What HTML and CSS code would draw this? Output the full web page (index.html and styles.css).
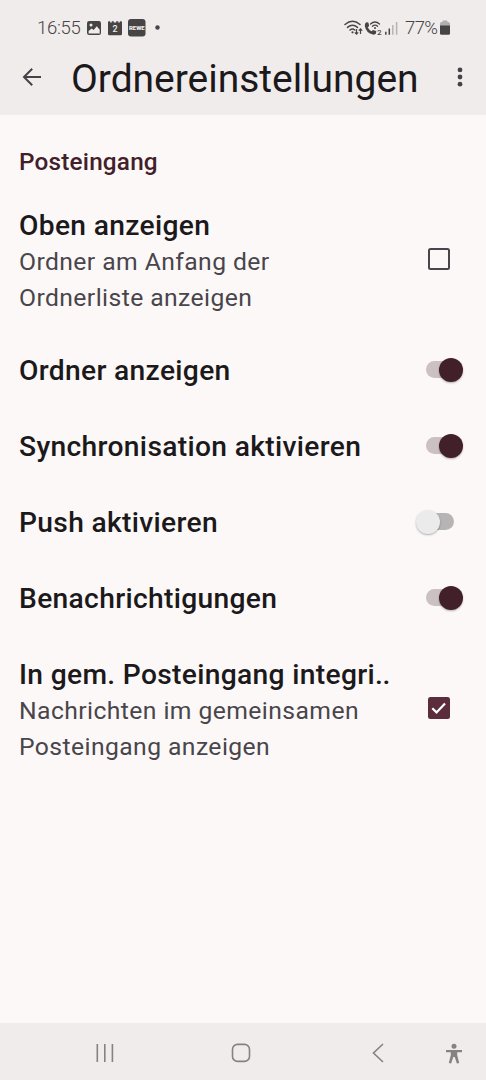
FILE: index.html
```html
<!DOCTYPE html>
<html lang="de">
<head>
  <meta charset="UTF-8" />
  <meta name="viewport" content="width=device-width, initial-scale=1.0" />
  <title>Ordnereinstellungen</title>
  <link rel="stylesheet" href="styles.css">
</head>
<body>
  <header class="top">
    <div class="statusbar">
      <span class="clock">16:55</span>
      <svg class="status-left" width="76" height="20" viewBox="0 0 76 20">
        <!-- gallery -->
        <rect x="1" y="3" width="14" height="14" rx="2.2" fill="#464444"/>
        <circle cx="5" cy="7" r="1.5" fill="#f0eceb"/>
        <path d="M2.6 13l3-2.4 2 1.3 3.2-3.7 2.9 3.6v3.6H2.6z" fill="#f0eceb"/>
        <!-- calendar -->
        <path d="M22 4.2q0-1 1-1h1.2v1.2h1.6V3.2h2v1.2h2.4V3.2h2v1.2h1.6V3.2H35q1 0 1 1V16q0 1.3-1.3 1.3H23.3Q22 17.3 22 16z" fill="#464444"/>
        <text x="29" y="13.7" class="cal-day">2</text>
        <!-- shop app -->
        <rect x="42" y="1" width="17.5" height="17.5" rx="3" fill="#464444"/>
        <text x="50.8" y="12" class="shop">REWE</text>
        <circle cx="71.5" cy="9.5" r="2.2" fill="#464444"/>
      </svg>
      <svg class="status-right" width="56" height="20" viewBox="0 0 56 20">
        <!-- wifi -->
        <g fill="none" stroke="#464444" stroke-width="1.5" stroke-linecap="round">
          <path d="M2 6.5Q9.5 0 17 6.5"/>
          <path d="M4.5 9.4Q9.5 5.2 14.5 9.4"/>
          <path d="M7 12Q9.5 10 11.8 12"/>
        </g>
        <circle cx="9.5" cy="14.3" r="1.1" fill="#464444"/>
        <path d="M13.5 11v5M11.8 14.4L13.5 16.2l1.7-1.8M17.5 16v-5M15.8 12.7L17.5 10.9l1.7 1.8" fill="none" stroke="#464444" stroke-width="1.2"/>
        <!-- wifi calling -->
        <path d="M23.3 4.3l2 .2.9 3.4-1.5 1.3q1.2 2.6 3.8 4l1.5-1.3 3.2 1.2-.2 2.5q-1 1.2-3 1-6.8-1.2-8.2-8.5-.2-2.8 1.5-3.8z" fill="#464444"/>
        <path d="M27.500 6Q32 2 36.500 6M29.400 8.200Q32 6 34.600 8.200" fill="none" stroke="#464444" stroke-width="1.3" stroke-linecap="round"/>
        <circle cx="32" cy="10" r="1" fill="#464444"/>
        <text x="34" y="16.6" class="sim">2</text>
        <!-- signal -->
        <path d="M42.8 13.7v3M46.3 10.5v6.2" stroke="#464444" stroke-width="1.5"/>
        <path d="M49.8 7v9.7M53.6 4v12.7" stroke="#b5b2b1" stroke-width="1.5"/>
      </svg>
      <span class="percent">77%</span>
      <svg class="battery" width="10" height="16" viewBox="0 0 10 16">
        <path d="M0 3.5Q0 2 1.5 2H2.5V1.2Q2.5.5 3.3.5h3.4q.8 0 .8.7V2h1q1.5 0 1.5 1.5V6H0z" fill="#b1aead"/>
        <path d="M0 5.5h10v7.7q0 1.5-1.5 1.5h-7Q0 14.7 0 13.2z" fill="#464444"/>
      </svg>
    </div>
    <div class="appbar">
      <svg class="back" width="20" height="20" viewBox="0 0 20 20">
        <path d="M19 10H2M10.2 1.8L2 10l8.2 8.2" fill="none" stroke="#464348" stroke-width="2"/>
      </svg>
      <h1>Ordnereinstellungen</h1>
      <svg class="more" width="6" height="20" viewBox="0 0 6 20">
        <circle cx="3" cy="2.9" r="2.4"/>
        <circle cx="3" cy="10" r="2.4"/>
        <circle cx="3" cy="17.2" r="2.4"/>
      </svg>
    </div>
  </header>

  <main class="settings">
    <h2>Posteingang</h2>
    <div class="item">
      <div class="text">
        <div class="title">Oben anzeigen</div>
        <div class="summary">Ordner am Anfang der<br>Ordnerliste anzeigen</div>
      </div>
      <div class="control"><span class="checkbox"></span></div>
    </div>
    <div class="item">
      <div class="text"><div class="title">Ordner anzeigen</div></div>
      <div class="control"><span class="switch on"></span></div>
    </div>
    <div class="item">
      <div class="text"><div class="title">Synchronisation aktivieren</div></div>
      <div class="control"><span class="switch on"></span></div>
    </div>
    <div class="item">
      <div class="text"><div class="title">Push aktivieren</div></div>
      <div class="control"><span class="switch"></span></div>
    </div>
    <div class="item">
      <div class="text"><div class="title">Benachrichtigungen</div></div>
      <div class="control"><span class="switch on"></span></div>
    </div>
    <div class="item">
      <div class="text">
        <div class="title">In gem. Posteingang integri<span class="dots">..</span></div>
        <div class="summary">Nachrichten im gemeinsamen<br>Posteingang anzeigen</div>
      </div>
      <div class="control">
        <span class="checkbox checked">
          <svg width="22" height="22" viewBox="0 0 22 22">
            <path d="M4.3 11.2l4.2 4.2 8.5-9" fill="none" stroke="#fff" stroke-width="2.2"/>
          </svg>
        </span>
      </div>
    </div>
  </main>

  <nav class="navbar">
    <svg width="20" height="20" viewBox="0 0 20 20"><path d="M2.3 1v18M9.8 1v18M17.4 1v18"/></svg>
    <svg width="20" height="20" viewBox="0 0 20 20"><rect x="1.5" y="1.4" width="17" height="17" rx="5"/></svg>
    <svg width="14" height="20" viewBox="0 0 14 20"><path d="M12 1L2.5 10l9.5 9"/></svg>
    <svg class="a11y" width="18" height="22" viewBox="0 0 18 22">
      <circle cx="9" cy="3.2" r="2.5"/>
      <path d="M1 7h16v2.2H12.2V12l2 8-2.3.6L9.7 14H8.3l-2.2 6.6-2.3-.6 2-8V9.2H1z"/>
    </svg>
  </nav>
</body>
</html>
```

FILE: styles.css
```css
* {
  box-sizing: border-box;
}
body {
  margin: 0;
  height: 1080px;
  display: flex;
  flex-direction: column;
  font-family: Roboto, sans-serif;
  background-color: #fcf8f7;
  color: #1b191b;
  overflow: hidden;
}
svg {
  display: block;
  flex: none;
}
.top {
  height: 115px;
  background-color: #f0eceb;
}
.statusbar {
  display: flex;
  align-items: center;
  height: 41px;
  padding: 14px 0 0 37px;
  color: #464444;
}
.clock {
  width: 49px;
  font-size: 18.5px;
  font-weight: 300;
  letter-spacing: -0.3px;
  white-space: nowrap;
}
.status-right {
  margin-left: 181px;
}
.cal-day {
  font-size: 9px;
  font-weight: 500;
  fill: #f0eceb;
  text-anchor: middle;
}
.shop {
  font-size: 6px;
  font-weight: 900;
  fill: #f0eceb;
  text-anchor: middle;
}
.sim {
  font-size: 8px;
  font-weight: 500;
  fill: #464444;
}
.percent {
  width: 35px;
  margin-left: 6px;
  font-size: 18.5px;
  font-weight: 300;
  letter-spacing: -0.6px;
  white-space: nowrap;
}
.appbar {
  display: flex;
  align-items: center;
  height: 72px;
  padding: 0 23px 0 22px;
}
h1 {
  flex: 1;
  margin: 4px 0 0 29px;
  font-size: 39px;
  font-weight: 400;
  line-height: 48px;
  letter-spacing: -0.03px;
  white-space: nowrap;
}
.more {
  fill: #464348;
}
.settings {
  flex: 1;
}
h2 {
  height: 73px;
  margin: 0;
  padding: 30px 0 0 19px;
  font-size: 24.3px;
  font-weight: 500;
  line-height: 33px;
  letter-spacing: 0.2px;
  color: #42202a;
}
.item {
  display: flex;
  align-items: center;
  justify-content: space-between;
  min-height: 76px;
  padding-left: 19px;
}
.text {
  padding: 20px 0;
  white-space: nowrap;
}
.text:has(.summary) {
  padding: 20px 0 17px;
}
.title {
  font-size: 28.2px;
  font-weight: 500;
  line-height: 36px;
  letter-spacing: 0.33px;
}
.dots {
  letter-spacing: -0.5px;
}
.summary {
  font-size: 24.7px;
  line-height: 36px;
  letter-spacing: 0.42px;
  color: #48454b;
}
.control {
  width: 71px;
  margin-bottom: 3px;
}
.checkbox {
  display: block;
  width: 22px;
  height: 22px;
  margin-left: 13px;
  border: 2px solid #48454b;
  border-radius: 2.5px;
}
.checkbox.checked {
  border: none;
  background-color: #5b2d3c;
}
.switch {
  display: flex;
  align-items: center;
  width: 28px;
  height: 17px;
  margin-left: 11px;
  border-radius: 9px;
  background-color: #b6b4b4;
}
.switch::before {
  content: "";
  flex: none;
  width: 24px;
  height: 24px;
  margin-left: -10px;
  border-radius: 50%;
  background-color: #ebebeb;
  box-shadow: 0 1px 2px rgba(0, 0, 0, 0.3);
}
.switch.on {
  background-color: #cbc0c2;
}
.switch.on::before {
  margin-left: 13px;
  background-color: #42202a;
}
.navbar {
  display: flex;
  align-items: center;
  height: 57px;
  padding: 3px 23px 0 95px;
  background-color: #f0eceb;
}
.navbar svg {
  fill: none;
  stroke: #858282;
  stroke-width: 1.6;
}
.navbar svg:nth-child(2) {
  margin-left: 116px;
}
.navbar svg:nth-child(3) {
  margin-left: 120px;
}
.navbar .a11y {
  margin-left: auto;
  margin-top: 2px;
  fill: #858282;
  stroke: none;
}
```
